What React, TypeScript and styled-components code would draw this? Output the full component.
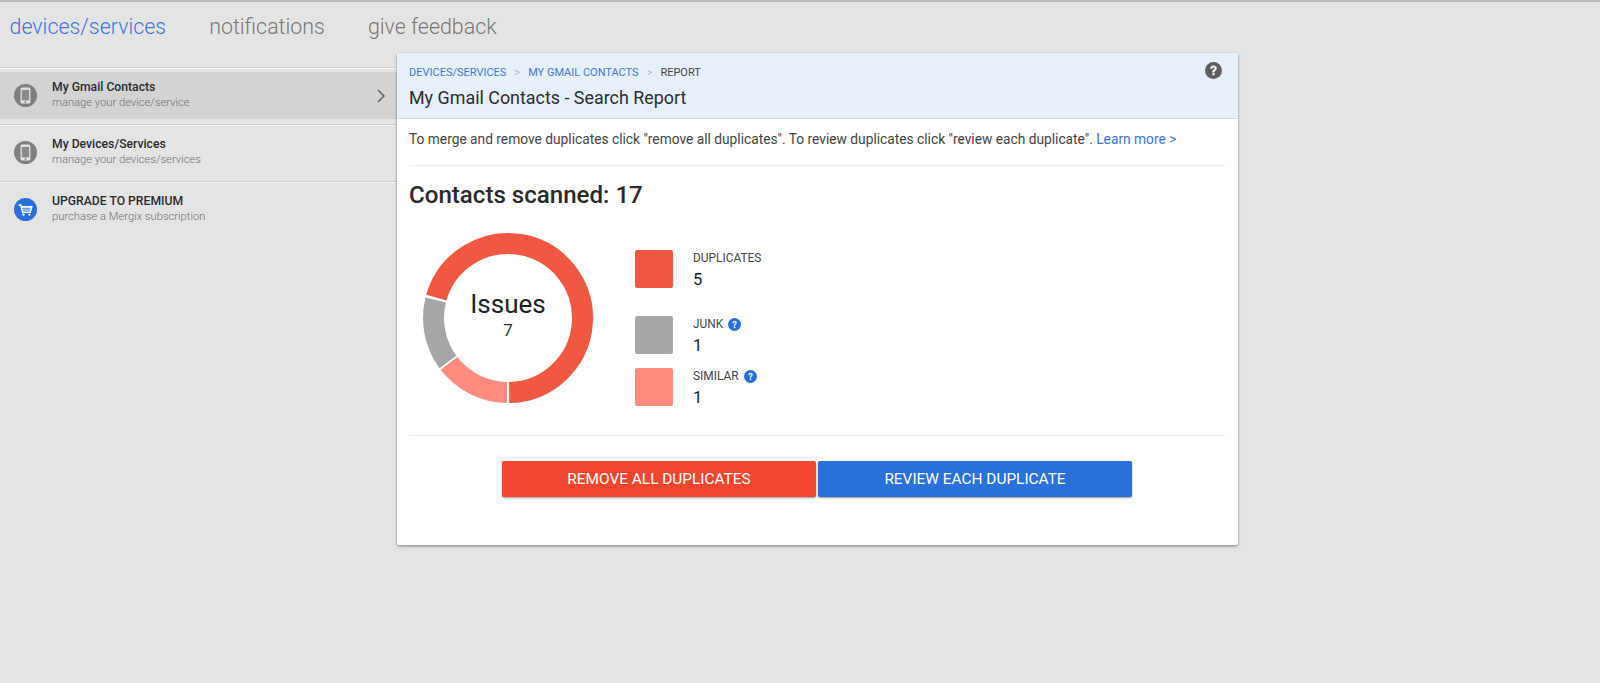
import React from "react";
import styled, { createGlobalStyle } from "styled-components";

const Global = createGlobalStyle`
  html, body { margin: 0; padding: 0; height: 100%; background: #e4e4e4; overflow: hidden; }
  body { font-family: Roboto, "Liberation Sans", sans-serif; color: #333; }
  * { box-sizing: border-box; }
`;

const Page = styled.div`
  height: 683px;
  border-top: 2px solid #b9b9b9;
  background: #e4e4e4;
`;
const Nav = styled.nav`
  display: flex;
  gap: 43px;
  height: 51px;
  padding: 11px 0 0 9.5px;
`;
const NavLink = styled.a<{ $active?: boolean }>`
  font-size: 21.4px;
  font-weight: 300;
  line-height: 28px;
  color: ${(p) => (p.$active ? "#3f74d6" : "#777")};
`;
const Body = styled.div`
  display: grid;
  grid-template-columns: 397px 841px;
`;
const Sidebar = styled.aside`
  margin-top: 14px;
  border-top: 1px solid #cfcfcf;
  box-shadow: inset 0 1px 0 #f6f6f6;
`;
const Row = styled.div`
  height: 57px;
  padding: 4px 0 6px;
  border-bottom: 1px solid #cdcdcd;
  box-shadow: 0 1px 0 #f2f2f2;
  &:last-child { border-bottom: none; box-shadow: none; }
`;
const RowInner = styled.div<{ $active?: boolean }>`
  height: 47px;
  display: flex;
  align-items: center;
  gap: 15px;
  padding: 0 11px 0 14px;
  background: ${(p) => (p.$active ? "#d3d3d3" : "transparent")};
`;
const RowIcon = styled.svg`
  width: 23px;
  height: 23px;
  flex: none;
`;
const RowText = styled.div`
  flex: 1;
  margin-top: -2px;
`;
const RowTitle = styled.div`
  font-size: 12.2px;
  font-weight: 500;
  line-height: 16px;
  color: #2b2b2b;
`;
const RowSub = styled.div`
  font-size: 11.2px;
  font-weight: 300;
  line-height: 16px;
  color: #6f6f6f;
`;
const Card = styled.main`
  height: 492px;
  background: #fff;
  box-shadow: 0 1px 3px rgba(0, 0, 0, 0.45);
  border-radius: 2px;
  display: flex;
  flex-direction: column;
`;
const CardHeader = styled.header`
  height: 66px;
  background: #e7f0fa;
  border-bottom: 1px solid #d5dade;
  padding: 13px 13px 0 12px;
  display: flex;
  justify-content: space-between;
  align-items: flex-start;
`;
const Crumbs = styled.div`
  display: flex;
  gap: 8px;
  font-size: 11px;
  line-height: 14px;
`;
const Crumb = styled.span<{ $link?: boolean }>`
  color: ${(p) => (p.$link ? "#3f74d6" : "#444")};
`;
const CrumbSep = styled.span`
  color: #b5b5b5;
`;
const Title = styled.h1`
  margin: 7px 0 0;
  font-size: 17.9px;
  line-height: 22px;
  font-weight: 400;
  color: #2c2c2c;
`;
const HelpIcon = styled.svg`
  width: 17px;
  height: 17px;
  margin-top: -4px;
  margin-right: 3px;
`;
const CardBody = styled.div`
  padding: 0 13px 0 12px;
`;
const Intro = styled.p`
  margin: 0;
  height: 47px;
  padding-top: 11px;
  font-size: 13.75px;
  line-height: 18px;
  color: #444;
  border-bottom: 1px solid #ececec;
`;
const IntroLink = styled.a`
  color: #3f74d6;
`;
const Scanned = styled.h2`
  margin: 16px 0 0;
  font-size: 24.1px;
  line-height: 26px;
  font-weight: 500;
  color: #2a2a2a;
`;
const Summary = styled.section`
  display: flex;
  height: 228px;
  padding-top: 24px;
  border-bottom: 1px solid #ececec;
`;
const Donut = styled.div`
  position: relative;
  width: 172px;
  height: 172px;
  flex: none;
  margin-left: 13px;
`;
const DonutSvg = styled.svg`
  display: block;
  width: 172px;
  height: 172px;
`;
const DonutLabel = styled.div`
  position: absolute;
  inset: 0;
  display: flex;
  flex-direction: column;
  align-items: center;
  justify-content: center;
  padding-bottom: 7px;
`;
const DonutTitle = styled.div`
  font-size: 26px;
  font-weight: 400;
  line-height: 30px;
  color: #222;
`;
const DonutValue = styled.div`
  font-size: 17px;
  font-weight: 400;
  line-height: 22px;
  color: #333;
`;
const Legend = styled.div`
  margin-left: 41px;
  margin-top: 18px;
  display: flex;
  flex-direction: column;
`;
const LegendItem = styled.div<{ $gap: number }>`
  display: flex;
  gap: 20px;
  height: 38px;
  margin-bottom: ${(p) => p.$gap}px;
`;
const Swatch = styled.div<{ $color: string }>`
  width: 38px;
  height: 38px;
  border-radius: 2px;
  background: ${(p) => p.$color};
`;
const LegendText = styled.div`
  padding-top: 1px;
`;
const LegendLabel = styled.div`
  display: flex;
  align-items: center;
  gap: 5px;
  font-size: 11.9px;
  line-height: 14px;
  color: #444;
`;
const LegendValue = styled.div`
  margin-top: 6px;
  font-size: 16.5px;
  line-height: 18px;
  color: #1d1d1d;
`;
const SmallHelp = styled.svg`
  width: 13px;
  height: 13px;
`;
const Actions = styled.div`
  display: flex;
  gap: 2px;
  margin-top: 25px;
  padding-left: 93px;
`;
const ActionButton = styled.button<{ $color: string; $width: number }>`
  width: ${(p) => p.$width}px;
  height: 36px;
  padding: 0;
  border: none;
  border-radius: 2px;
  background: ${(p) => p.$color};
  color: #fff;
  font-family: inherit;
  font-size: 15.4px;
  font-weight: 400;
  box-shadow: 0 1px 2px rgba(0, 0, 0, 0.4);
`;
const Chevron = styled.svg`
  width: 10px;
  height: 14px;
  flex: none;
`;

const Phone = () => (
  <RowIcon viewBox="0 0 23 23">
    <circle cx="11.5" cy="11.5" r="11.5" fill="#7f7f7f" />
    <rect x="6.6" y="3.4" width="9.8" height="16.2" rx="1.6" fill="#e6e6e6" />
    <rect x="7.8" y="5.8" width="7.4" height="10.6" fill="#8a8a8a" />
    <circle cx="11.5" cy="18" r="0.9" fill="#7f7f7f" />
  </RowIcon>
);
const Cart = () => (
  <RowIcon viewBox="0 0 23 23">
    <circle cx="11.5" cy="11.5" r="11.5" fill="#2a6fd9" />
    <path d="M4.6 7h2.2l1.8 7.2h7.6l1.6-5.6H7.4" fill="none" stroke="#fff" strokeWidth="1.4" />
    <path d="M8 9.8h9M8.6 12h8" stroke="#fff" strokeWidth="1" />
    <circle cx="9.5" cy="16.6" r="1.2" fill="#fff" />
    <circle cx="15.4" cy="16.6" r="1.2" fill="#fff" />
  </RowIcon>
);
const QuestionBlue = () => (
  <SmallHelp viewBox="0 0 24 24">
    <circle cx="12" cy="12" r="12" fill="#2a6fd9" />
    <path d="M8.200 9.300c0-2.300 1.700-3.600 3.900-3.600 2.200 0 3.800 1.300 3.800 3.200 0 2.600-3 2.700-3 5.100h-2c0-3.400 3-3.300 3-5 0-.9-.7-1.500-1.800-1.500-1.200 0-1.900.7-1.900 1.800z" fill="#fff" stroke="#fff" strokeWidth="0.6" />
    <rect x="10.600" y="15.600" width="2.800" height="3" fill="#fff" />
  </SmallHelp>
);

const R = 74.5;
const polar = (deg: number) => {
  const a = (deg * Math.PI) / 180;
  return [86 + R * Math.sin(a), 86 - R * Math.cos(a)];
};
const arc = (from: number, to: number) => {
  const [x1, y1] = polar(from);
  const [x2, y2] = polar(to);
  return `M${x1} ${y1}A${R} ${R} 0 ${to - from > 180 ? 1 : 0} 1 ${x2} ${y2}`;
};
const slices = [
  { from: -74.2, to: 179.2, color: "#f15843" },
  { from: 180.8, to: 232.4, color: "#ff8a80" },
  { from: 233.8, to: 284, color: "#a6a6a6" },
];

export default function App() {
  return (
    <Page>
      <Global />
      <Nav>
        <NavLink $active>devices/services</NavLink>
        <NavLink>notifications</NavLink>
        <NavLink>give feedback</NavLink>
      </Nav>
      <Body>
        <Sidebar>
          <Row>
            <RowInner $active>
              <Phone />
              <RowText>
                <RowTitle>My Gmail Contacts</RowTitle>
                <RowSub>manage your device/service</RowSub>
              </RowText>
              <Chevron viewBox="0 0 10 14">
                <path d="M2 1l6 6-6 6" fill="none" stroke="#555" strokeWidth="1.4" />
              </Chevron>
            </RowInner>
          </Row>
          <Row>
            <RowInner>
              <Phone />
              <RowText>
                <RowTitle>My Devices/Services</RowTitle>
                <RowSub>manage your devices/services</RowSub>
              </RowText>
            </RowInner>
          </Row>
          <Row>
            <RowInner>
              <Cart />
              <RowText>
                <RowTitle>UPGRADE TO PREMIUM</RowTitle>
                <RowSub>purchase a Mergix subscription</RowSub>
              </RowText>
            </RowInner>
          </Row>
        </Sidebar>
        <Card>
          <CardHeader>
            <div>
              <Crumbs>
                <Crumb $link>DEVICES/SERVICES</Crumb>
                <CrumbSep>&gt;</CrumbSep>
                <Crumb $link>MY GMAIL CONTACTS</Crumb>
                <CrumbSep>&gt;</CrumbSep>
                <Crumb>REPORT</Crumb>
              </Crumbs>
              <Title>My Gmail Contacts - Search Report</Title>
            </div>
            <HelpIcon viewBox="0 0 24 24">
              <circle cx="12" cy="12" r="12" fill="#5f5f5f" />
              <path d="M7.800 9.300c0-2.600 1.900-4 4.300-4 2.400 0 4.200 1.400 4.200 3.500 0 2.900-3.200 2.900-3.200 5.700h-2.400c0-3.700 3.100-3.600 3.100-5.500 0-.9-.7-1.500-1.700-1.500-1.100 0-1.800.7-1.800 1.800z" fill="#fff" stroke="#fff" strokeWidth="0.6" />
              <rect x="10.500" y="15.700" width="2.900" height="3" fill="#fff" />
            </HelpIcon>
          </CardHeader>
          <CardBody>
            <Intro>
              To merge and remove duplicates click "remove all duplicates". To review duplicates click "review each duplicate". <IntroLink>Learn more &gt;</IntroLink>
            </Intro>
            <Scanned>Contacts scanned: 17</Scanned>
            <Summary>
              <Donut>
                <DonutSvg viewBox="0 0 172 172">
                  {slices.map((s) => (
                    <path key={s.from} d={arc(s.from, s.to)} fill="none" stroke={s.color} strokeWidth="21" />
                  ))}
                </DonutSvg>
                <DonutLabel>
                  <DonutTitle>Issues</DonutTitle>
                  <DonutValue>7</DonutValue>
                </DonutLabel>
              </Donut>
              <Legend>
                <LegendItem $gap={28}>
                  <Swatch $color="#f15843" />
                  <LegendText>
                    <LegendLabel>DUPLICATES</LegendLabel>
                    <LegendValue>5</LegendValue>
                  </LegendText>
                </LegendItem>
                <LegendItem $gap={14}>
                  <Swatch $color="#a6a6a6" />
                  <LegendText>
                    <LegendLabel>JUNK <QuestionBlue /></LegendLabel>
                    <LegendValue>1</LegendValue>
                  </LegendText>
                </LegendItem>
                <LegendItem $gap={0}>
                  <Swatch $color="#ff8a80" />
                  <LegendText>
                    <LegendLabel>SIMILAR <QuestionBlue /></LegendLabel>
                    <LegendValue>1</LegendValue>
                  </LegendText>
                </LegendItem>
              </Legend>
            </Summary>
            <Actions>
              <ActionButton $color="#f2452d" $width={314}>REMOVE ALL DUPLICATES</ActionButton>
              <ActionButton $color="#2a70d9" $width={314}>REVIEW EACH DUPLICATE</ActionButton>
            </Actions>
          </CardBody>
        </Card>
      </Body>
    </Page>
  );
}
